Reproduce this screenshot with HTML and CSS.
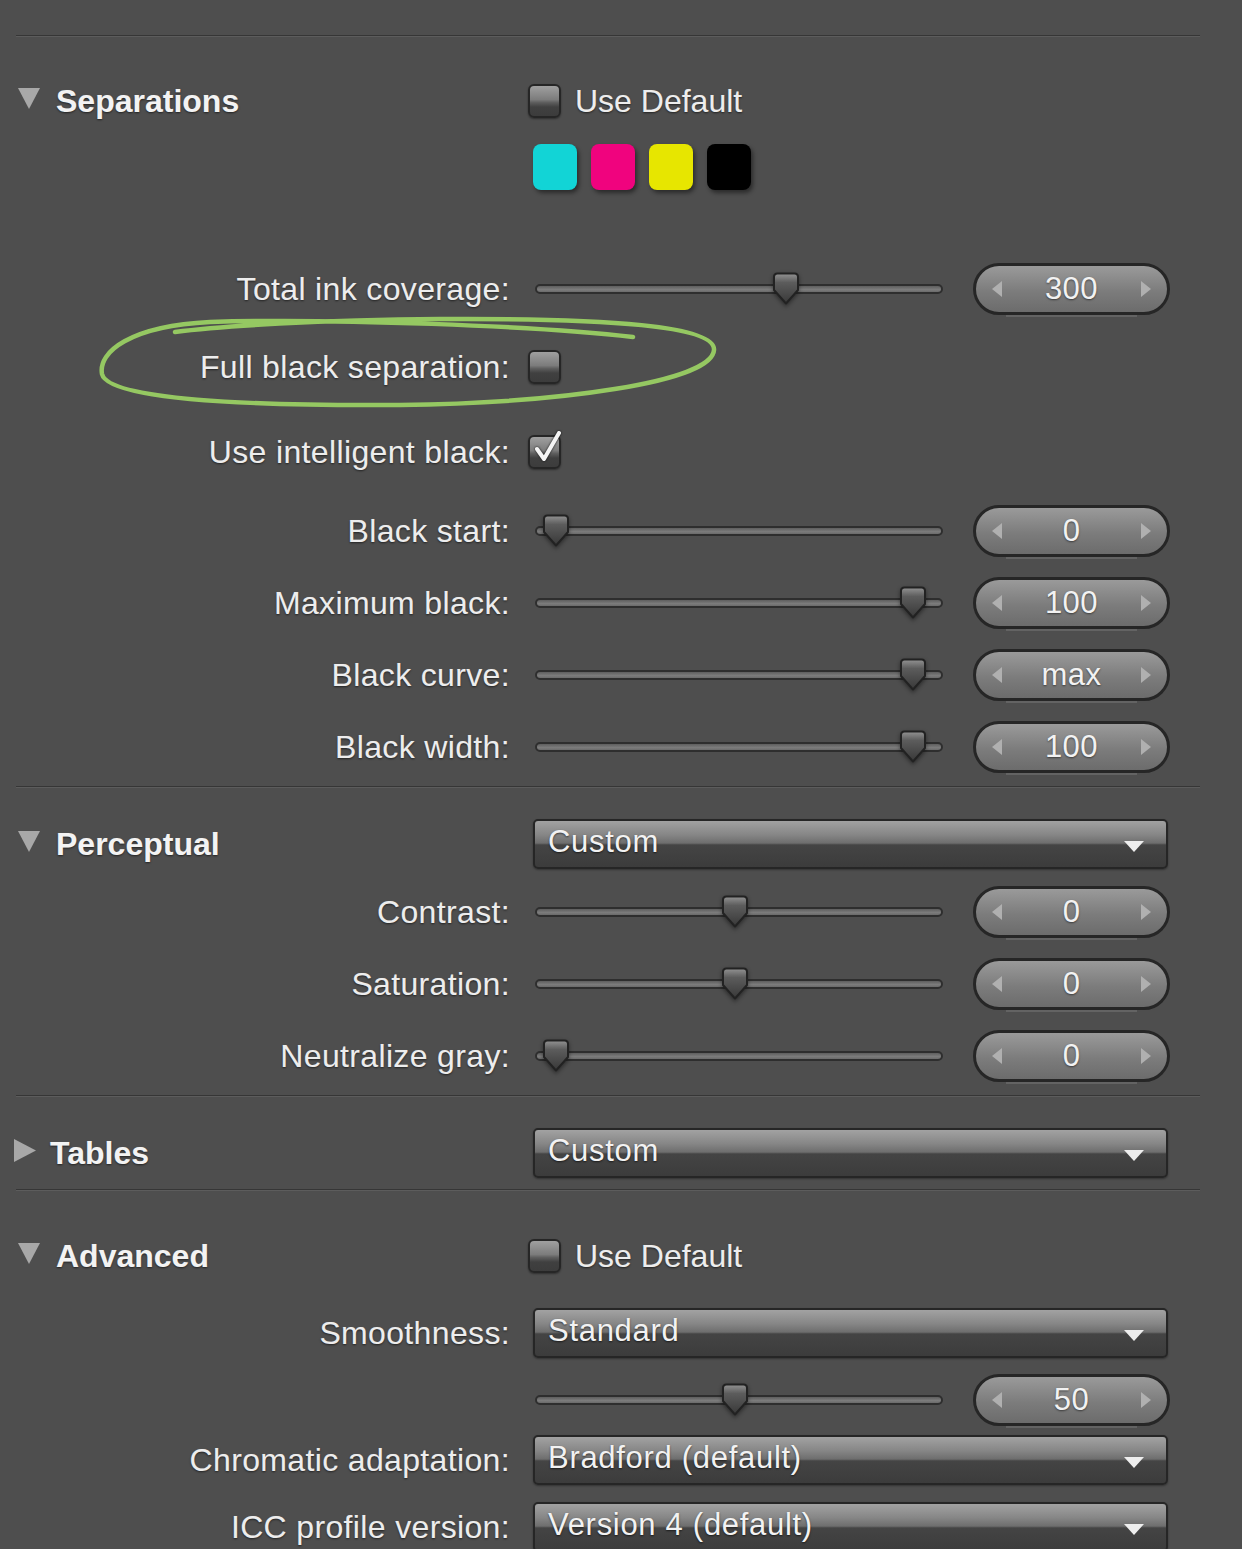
FILE: index.html
```html
<!DOCTYPE html>
<html>
<head>
<meta charset="utf-8">
<link rel="stylesheet" href="styles.css">
</head>
<body>
<svg class="defs" width="0" height="0" aria-hidden="true">
  <defs>
    <linearGradient id="thumbGrad" x1="0" y1="0" x2="0" y2="1">
      <stop offset="0" stop-color="#949494"/>
      <stop offset="0.3" stop-color="#5c5c5c"/>
      <stop offset="1" stop-color="#383838"/>
    </linearGradient>
    <symbol id="thumb" viewBox="0 0 30 34">
      <path d="M3 5 Q3 1.5 6.5 1.5 H23.5 Q27 1.5 27 5 V18 L15 31.5 L3 18 Z" fill="url(#thumbGrad)" stroke="#222" stroke-width="2" stroke-linejoin="round"/>
    </symbol>
  </defs>
</svg>

<div class="panel">
  <div class="sep"></div>

  <!-- Separations -->
  <div class="row sp-head">
    <div class="label head"><svg class="tri" width="22" height="21" viewBox="0 0 22 21"><polygon points="0,0 22,0 11,21" /></svg>Separations</div>
    <div class="ctrl"><span class="cb"></span><span class="cb-text">Use Default</span></div>
  </div>
  <div class="row swatch-row">
    <div></div>
    <div class="ctrl swatches">
      <span class="swatch cyan"></span><span class="swatch magenta"></span><span class="swatch yellow"></span><span class="swatch black"></span>
    </div>
  </div>
  <div class="row sp-ink">
    <div class="label">Total ink coverage:</div>
    <div class="ctrl">
      <div class="slider"><div class="track"></div><svg class="thumb" style="--p:0.644"><use href="#thumb"/></svg></div>
      <div class="stepper"><span class="arr l"></span><span class="val">300</span><span class="arr r"></span></div>
    </div>
  </div>
  <div class="row sp-full">
    <div class="label">Full black separation:</div>
    <div class="ctrl"><span class="cb"></span></div>
  </div>
  <div class="row sp-intel">
    <div class="label">Use intelligent black:</div>
    <div class="ctrl"><span class="cb checked"><svg class="check" width="30" height="36" viewBox="0 0 30 36"><path d="M4 19 L11 29 L26 3" /></svg></span></div>
  </div>
  <div class="row sp-bstart">
    <div class="label">Black start:</div>
    <div class="ctrl">
      <div class="slider"><div class="track"></div><svg class="thumb" style="--p:0"><use href="#thumb"/></svg></div>
      <div class="stepper"><span class="arr l"></span><span class="val">0</span><span class="arr r"></span></div>
    </div>
  </div>
  <div class="row">
    <div class="label">Maximum black:</div>
    <div class="ctrl">
      <div class="slider"><div class="track"></div><svg class="thumb" style="--p:1"><use href="#thumb"/></svg></div>
      <div class="stepper"><span class="arr l"></span><span class="val">100</span><span class="arr r"></span></div>
    </div>
  </div>
  <div class="row">
    <div class="label">Black curve:</div>
    <div class="ctrl">
      <div class="slider"><div class="track"></div><svg class="thumb" style="--p:1"><use href="#thumb"/></svg></div>
      <div class="stepper"><span class="arr l"></span><span class="val">max</span><span class="arr r"></span></div>
    </div>
  </div>
  <div class="row">
    <div class="label">Black width:</div>
    <div class="ctrl">
      <div class="slider"><div class="track"></div><svg class="thumb" style="--p:1"><use href="#thumb"/></svg></div>
      <div class="stepper"><span class="arr l"></span><span class="val">100</span><span class="arr r"></span></div>
    </div>
  </div>

  <div class="sep sp-sep"></div>

  <!-- Perceptual -->
  <div class="row sp-sechead">
    <div class="label head"><svg class="tri" width="22" height="21" viewBox="0 0 22 21"><polygon points="0,0 22,0 11,21" /></svg>Perceptual</div>
    <div class="ctrl"><div class="dropdown"><span>Custom</span><span class="dd-arr"></span></div></div>
  </div>
  <div class="row sp-contrast">
    <div class="label">Contrast:</div>
    <div class="ctrl">
      <div class="slider"><div class="track"></div><svg class="thumb" style="--p:0.5"><use href="#thumb"/></svg></div>
      <div class="stepper"><span class="arr l"></span><span class="val">0</span><span class="arr r"></span></div>
    </div>
  </div>
  <div class="row">
    <div class="label">Saturation:</div>
    <div class="ctrl">
      <div class="slider"><div class="track"></div><svg class="thumb" style="--p:0.5"><use href="#thumb"/></svg></div>
      <div class="stepper"><span class="arr l"></span><span class="val">0</span><span class="arr r"></span></div>
    </div>
  </div>
  <div class="row">
    <div class="label">Neutralize gray:</div>
    <div class="ctrl">
      <div class="slider"><div class="track"></div><svg class="thumb" style="--p:0"><use href="#thumb"/></svg></div>
      <div class="stepper"><span class="arr l"></span><span class="val">0</span><span class="arr r"></span></div>
    </div>
  </div>

  <div class="sep sp-sep"></div>

  <!-- Tables -->
  <div class="row sp-sechead">
    <div class="label head closed"><svg class="tri" width="22" height="23" viewBox="0 0 22 23"><polygon points="0,0 22,11.5 0,23" /></svg>Tables</div>
    <div class="ctrl"><div class="dropdown"><span>Custom</span><span class="dd-arr"></span></div></div>
  </div>

  <div class="sep sp-sep2"></div>

  <!-- Advanced -->
  <div class="row sp-adv">
    <div class="label head"><svg class="tri" width="22" height="21" viewBox="0 0 22 21"><polygon points="0,0 22,0 11,21" /></svg>Advanced</div>
    <div class="ctrl"><span class="cb"></span><span class="cb-text">Use Default</span></div>
  </div>
  <div class="row sp-smooth">
    <div class="label">Smoothness:</div>
    <div class="ctrl"><div class="dropdown"><span>Standard</span><span class="dd-arr"></span></div></div>
  </div>
  <div class="row sp-fifty">
    <div></div>
    <div class="ctrl">
      <div class="slider"><div class="track"></div><svg class="thumb" style="--p:0.5"><use href="#thumb"/></svg></div>
      <div class="stepper"><span class="arr l"></span><span class="val">50</span><span class="arr r"></span></div>
    </div>
  </div>
  <div class="row sp-chrom">
    <div class="label">Chromatic adaptation:</div>
    <div class="ctrl"><div class="dropdown"><span>Bradford (default)</span><span class="dd-arr"></span></div></div>
  </div>
  <div class="row sp-icc">
    <div class="label">ICC profile version:</div>
    <div class="ctrl"><div class="dropdown"><span>Version 4 (default)</span><span class="dd-arr"></span></div></div>
  </div>
</div>

<svg class="annotation" width="1242" height="1549" viewBox="0 0 1242 1549">
  <path d="M633 337 C 540 326, 330 318, 210 322 C 130 326, 98 352, 102 374 C 108 400, 250 406, 400 405 C 560 403, 712 382, 714 350 C 716 326, 610 318, 440 319 C 320 320, 220 326, 175 332" />
</svg>
</body>
</html>
```
FILE: styles.css
```css
html, body {
  margin: 0;
  height: 1549px;
  overflow: hidden;
}

body {
  background: #4e4e4e;
  font-family: "Liberation Sans", Arial, sans-serif;
  color: #ebebeb;
  position: relative;
}

.defs {
  position: absolute;
}

.panel {
  width: 1184px;
  padding: 35px 0 0 16px;
}

.sep {
  height: 1px;
  background: #363636;
  border-bottom: 1px solid #5c5c5c;
}

.row {
  display: grid;
  grid-template-columns: 494px 1fr;
  column-gap: 18px;
  align-items: center;
  height: 52px;
  margin-top: 20px;
}

/* vertical rhythm */
.sp-head { margin-top: 38px; }
.swatch-row { margin-top: 17px; height: 46px; }
.sp-ink { margin-top: 73px; }
.sp-full { margin-top: 26px; }
.sp-intel { margin-top: 33px; }
.sp-bstart { margin-top: 27px; }
.sp-sep { margin-top: 13px; }
.sp-sechead { margin-top: 30px; }
.sp-contrast { margin-top: 16px; }
.sp-sep2 { margin-top: 10px; }
.sp-adv { margin-top: 39px; }
.sp-smooth { margin-top: 25px; }
.sp-fifty { margin-top: 15px; }
.sp-chrom { margin-top: 8px; }
.sp-icc { margin-top: 15px; }

.label {
  font-size: 32px;
  letter-spacing: 0.35px;
  text-align: right;
  white-space: nowrap;
  color: #ededed;
  text-shadow: 0 1px 2px rgba(0, 0, 0, 0.6), 0 0 1px rgba(255, 255, 255, 0.25);
}

.head {
  text-align: left;
  font-weight: bold;
  letter-spacing: 0;
  color: #f3f3f3;
  display: flex;
  align-items: center;
  gap: 16px;
  padding-left: 2px;
}

.head.closed {
  padding-left: 0;
  margin-left: -2px;
  gap: 14px;
}

.tri {
  fill: #a8a8a8;
  flex: none;
  margin-top: -6px;
}

.ctrl {
  display: flex;
  align-items: center;
  height: 100%;
}

/* checkbox */
.cb {
  position: relative;
  width: 29px;
  height: 30px;
  border: 2px solid #262626;
  border-radius: 6px;
  background: linear-gradient(#a0a0a0 0%, #7c7c7c 45%, #5e5e5e 55%, #404040 70%, #3c3c3c 100%);
  box-shadow: 0 1px 2px rgba(0, 0, 0, 0.4);
  flex: none;
}

.check {
  position: absolute;
  left: 3px;
  top: -7px;
  overflow: visible;
}

.check path {
  fill: none;
  stroke: #f4f4f4;
  stroke-width: 4;
  stroke-linecap: round;
  stroke-linejoin: round;
  filter: drop-shadow(0 0 1px #111);
}

.cb-text {
  font-size: 32px;
  margin-left: 14px;
  color: #ededed;
  text-shadow: 0 1px 2px rgba(0, 0, 0, 0.6), 0 0 1px rgba(255, 255, 255, 0.25);
}

/* swatches */
.swatches {
  gap: 14px;
  padding-left: 5px;
}

.swatch {
  width: 44px;
  height: 46px;
  border-radius: 8px;
  box-shadow: 2px 3px 4px rgba(0, 0, 0, 0.45);
}

.cyan { background: #12d4d6; }
.magenta { background: #f0037e; }
.yellow { background: #e7e600; }
.black { background: #000; }

/* slider */
.slider {
  position: relative;
  width: 408px;
  height: 52px;
  margin-left: 7px;
}

.track {
  position: absolute;
  left: 0;
  right: 0;
  top: 21px;
  height: 6px;
  border: 2px solid #2e2e2e;
  border-radius: 6px;
  background: linear-gradient(#5e5e5e, #7c7c7c 60%, #6a6a6a);
}

.thumb {
  position: absolute;
  width: 30px;
  height: 34px;
  top: 9px;
  left: calc(6px + var(--p) * 357px);
  filter: drop-shadow(0 2px 2px rgba(0, 0, 0, 0.45));
}

/* stepper */
.stepper {
  position: relative;
  margin-left: 30px;
  box-sizing: border-box;
  width: 197px;
  height: 52px;
  border: 3px solid #262626;
  border-radius: 26px;
  background: linear-gradient(#9a9a9a, #7c7c7c 55%, #6c6c6c);
  display: flex;
  align-items: center;
  justify-content: space-between;
  padding: 0 16px;
}

.stepper::after {
  content: "";
  position: absolute;
  left: 30px;
  right: 30px;
  bottom: -5px;
  height: 2px;
  background: rgba(255, 255, 255, 0.12);
}

.val {
  font-size: 31px;
  letter-spacing: 0.5px;
  color: #f2f2f2;
  text-shadow: 0 1px 2px rgba(0, 0, 0, 0.5);
}

.arr {
  width: 0;
  height: 0;
  border-top: 8px solid transparent;
  border-bottom: 8px solid transparent;
}

.arr.l { border-right: 10px solid #b0b0b0; }
.arr.r { border-left: 10px solid #b0b0b0; }

/* dropdown */
.dropdown {
  margin-left: 5px;
  width: 635px;
  height: 50px;
  box-sizing: border-box;
  border: 2px solid #262626;
  border-radius: 5px;
  background: linear-gradient(#a2a2a2 0%, #868686 30%, #6e6e6e 48%, #444 52%, #3c3c3c 100%);
  display: flex;
  align-items: center;
  justify-content: space-between;
  padding: 0 22px 4px 13px;
  font-size: 31px;
  letter-spacing: 0.7px;
  color: #f2f2f2;
  text-shadow: 0 1px 2px rgba(0, 0, 0, 0.6);
  box-shadow: 0 1px 2px rgba(0, 0, 0, 0.35);
}

.dd-arr {
  width: 0;
  height: 0;
  border-left: 10px solid transparent;
  border-right: 10px solid transparent;
  border-top: 11px solid #eeeeee;
  margin-top: 8px;
}

/* hand-drawn annotation */
.annotation {
  position: absolute;
  left: 0;
  top: 0;
  pointer-events: none;
}

.annotation path {
  fill: none;
  stroke: #95c862;
  stroke-width: 4.5;
  stroke-linecap: round;
  stroke-linejoin: round;
}
```
